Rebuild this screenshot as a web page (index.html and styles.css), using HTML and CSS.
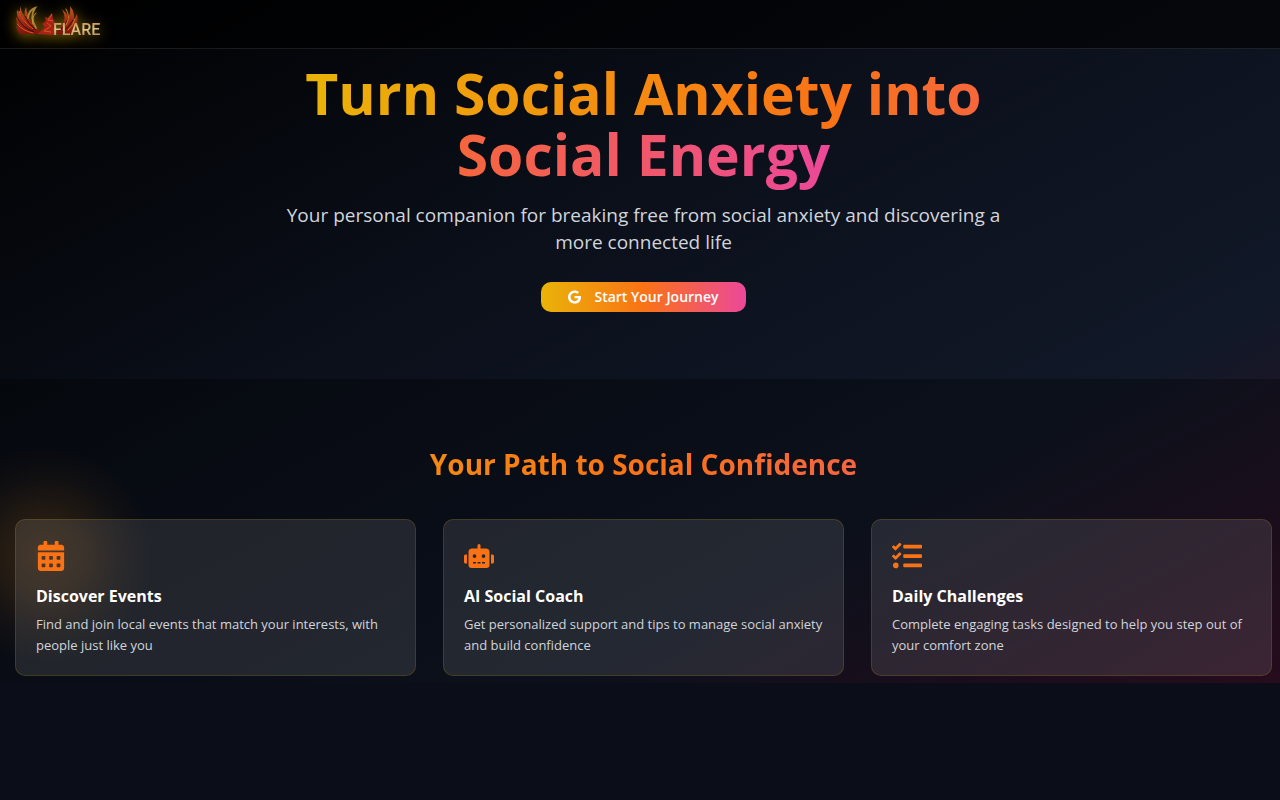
FILE: index.html
```html
<!DOCTYPE html>
<html lang="en">
<head>
<meta charset="utf-8">
<meta name="viewport" content="width=device-width, initial-scale=1">
<title>Flare</title>
<link rel="stylesheet" href="styles.css">
</head>
<body>
<div class="page">
  <header class="topbar">
    <a class="logo" href="#" aria-label="Flare home">
      <svg class="logo-art" viewBox="0 0 82 34" role="img" aria-label="Flare">
        <defs>
          <linearGradient id="fire" x1="0" y1="0" x2="0" y2="1">
            <stop offset="0" stop-color="#b8601f"/>
            <stop offset="0.45" stop-color="#a83216"/>
            <stop offset="1" stop-color="#7c140e"/>
          </linearGradient>
          <linearGradient id="gold" x1="0" y1="0" x2="0" y2="1">
            <stop offset="0" stop-color="#c08a45"/>
            <stop offset="0.5" stop-color="#dcc48c"/>
            <stop offset="1" stop-color="#a87838"/>
          </linearGradient>
        </defs>
        <path d="M4 1Q5 7 9 12Q8 6 10 2Q11 12 18 20L24 26L26 29H4Q1 26 0 21L3 22Q0 17 0 12L3 15Q0 9 1 5L4 9Z" fill="url(#fire)"/>
        <path d="M54 1Q60 8 57 17L61 9Q63 18 58 24L61 21Q60 27 55 29H38L44 23Q50 17 48 9Q47 5 45 4Q51 7 52 13Q55 8 54 1Z" fill="url(#fire)"/>
        <g fill="none" stroke="#3a0806" stroke-width="1">
          <path d="M4 8Q7 18 18 25"/>
          <path d="M2 14Q7 23 18 27"/>
          <path d="M9 11Q12 19 20 25"/>
          <path d="M57 15Q54 22 46 27"/>
          <path d="M52 13Q51 19 43 26"/>
        </g>
        <g fill="none" stroke-linecap="round">
          <path d="M3 6Q6 17 17 24M1 19Q7 26 17 28" stroke="#dd5a24"/>
          <path d="M12 13Q13 5 19 3Q13 12 20 23" stroke="#a87f2c" stroke-width="2"/>
          <path d="M17 19Q15 13 20 8" stroke="#c0963e"/>
          <path d="M50 4Q55 12 50 20M59 14Q58 20 52 25" stroke="#c9802a"/>
        </g>
        <path d="M21 29L26 25L29 22L26 19L30 16L29 12L32 13L36 8L37 14L39 17L37 21L40 27L37 30Z" fill="#a92214"/>
        <path d="M36 9L32 15L37 16M31 18L35 21L28 26L35 27" fill="none" stroke="#d0552a"/>
        <text class="logo-text" x="37" y="30" fill="url(#gold)">FLARE</text>
      </svg>
    </a>
  </header>
  <main>
    <section class="hero">
      <h1 class="hero-title"><span class="flame-text">Turn Social Anxiety into Social Energy</span></h1>
      <p class="hero-text">Your personal companion for breaking free from social anxiety and discovering a more connected life</p>
      <button class="cta" type="button">
        <svg class="cta-icon" viewBox="0 0 488 512" aria-hidden="true"><path d="M488 261.8C488 403.3 391.1 504 248 504 110.8 504 0 393.2 0 256S110.8 8 248 8c66.8 0 123 24.5 166.3 64.9l-67.5 64.9C258.5 52.6 94.3 116.6 94.3 256c0 86.5 69.1 156.6 153.7 156.6 98.2 0 135-70.4 140.8-106.9H248v-85.3h236.1c2.3 12.7 3.9 24.9 3.9 41.4z"/></svg>
        Start Your Journey
      </button>
    </section>
    <section class="features">
      <h2 class="features-title flame-text">Your Path to Social Confidence</h2>
      <div class="cards">
        <article class="card">
          <svg class="card-icon" viewBox="0 0 448 512" aria-hidden="true"><path d="M0 464c0 26.500 21.500 48 48 48h352c26.500 0 48-21.500 48-48V192H0zM332 256h40q12 0 12 12v40q0 12-12 12h-40q-12 0-12-12v-40q0-12 12-12zm0 128h40q12 0 12 12v40q0 12-12 12h-40q-12 0-12-12v-40q0-12 12-12zM204 256h40q12 0 12 12v40q0 12-12 12h-40q-12 0-12-12v-40q0-12 12-12zm0 128h40q12 0 12 12v40q0 12-12 12h-40q-12 0-12-12v-40q0-12 12-12zM76 256h40q12 0 12 12v40q0 12-12 12H76q-12 0-12-12v-40q0-12 12-12zm0 128h40q12 0 12 12v40q0 12-12 12H76q-12 0-12-12v-40q0-12 12-12zM400 64h-48V16c0-8.800-7.200-16-16-16h-32c-8.800 0-16 7.200-16 16v48H160V16c0-8.800-7.200-16-16-16h-32c-8.800 0-16 7.200-16 16v48H48C21.500 64 0 85.500 0 112v48h448v-48c0-26.500-21.500-48-48-48z"/></svg>
          <h3 class="card-title">Discover Events</h3>
          <p class="card-text">Find and join local events that match your interests, with people just like you</p>
        </article>
        <article class="card">
          <svg class="card-icon" viewBox="0 0 640 512" aria-hidden="true"><path d="M32 224H64V416H32A32 32 0 0 1 0 384V256A32 32 0 0 1 32 224Zm512-48V448a64 64 0 0 1-64 64H160a64 64 0 0 1-64-64V176a80 80 0 0 1 80-80H288V32a32 32 0 0 1 64 0V96H464A80 80 0 0 1 544 176ZM264 256a40 40 0 1 0-40 40A40 40 0 0 0 264 256Zm-8 128H192v32h64Zm96 0H288v32h64ZM456 256a40 40 0 1 0-40 40A40 40 0 0 0 456 256Zm-8 128H384v32h64ZM640 256V384a32 32 0 0 1-32 32H576V224h32A32 32 0 0 1 640 256Z"/></svg>
          <h3 class="card-title">AI Social Coach</h3>
          <p class="card-text">Get personalized support and tips to manage social anxiety and build confidence</p>
        </article>
        <article class="card">
          <svg class="card-icon" viewBox="0 0 512 512" aria-hidden="true"><path d="M139.610 35.500a12 12 0 0 0-17 0L58.930 98.810l-22.700-22.120a12 12 0 0 0-17 0L3.530 92.410a12 12 0 0 0 0 17l47.590 47.400a12.780 12.780 0 0 0 17.610 0l15.590-15.620L156.520 69a12.090 12.090 0 0 0 .090-17zm0 159.190a12 12 0 0 0-17 0l-63.680 63.720-22.700-22.100a12 12 0 0 0-17 0L3.530 252a12 12 0 0 0 0 17L51 316.500a12.770 12.770 0 0 0 17.600 0l15.700-15.690 72.200-72.220a12 12 0 0 0 .090-16.900zM64 368c-26.490 0-48.590 21.500-48.590 48S37.530 464 64 464a48 48 0 0 0 0-96zm432 16H208a16 16 0 0 0-16 16v32a16 16 0 0 0 16 16h288a16 16 0 0 0 16-16v-32a16 16 0 0 0-16-16zm0-320H208a16 16 0 0 0-16 16v32a16 16 0 0 0 16 16h288a16 16 0 0 0 16-16V80a16 16 0 0 0-16-16zm0 160H208a16 16 0 0 0-16 16v32a16 16 0 0 0 16 16h288a16 16 0 0 0 16-16v-32a16 16 0 0 0-16-16z"/></svg>
          <h3 class="card-title">Daily Challenges</h3>
          <p class="card-text">Complete engaging tasks designed to help you step out of your comfort zone</p>
        </article>
      </div>
    </section>
  </main>
</div>
</body>
</html>
```
FILE: styles.css
```css
* {
  box-sizing: border-box;
}

body {
  margin: 0;
  min-height: 100vh;
  background: #0b0d18;
  color: #fff;
  font-family: "Segoe UI", "Open Sans", "Noto Sans", sans-serif;
}

.page {
  background: linear-gradient(to bottom right, #000 0%, #0b101b 40%, #111827 72%, #38122a 100%);
}

.topbar {
  display: flex;
  align-items: center;
  height: 49px;
  padding: 0 16px;
  background: rgba(0, 0, 0, 0.6);
  border-bottom: 1px solid rgba(255, 255, 255, 0.1);
}

.logo {
  display: block;
  margin-bottom: 5px;
}

.logo-art {
  display: block;
  width: 82px;
  height: 34px;
  overflow: visible;
  filter: drop-shadow(0 2px 7px rgba(234, 179, 8, 0.6));
}

.logo-text {
  font-family: Roboto, sans-serif;
  font-size: 16px;
  font-weight: 500;
}

.hero {
  display: flex;
  flex-direction: column;
  align-items: center;
  padding: 14px 8px 67px 15px;
  text-align: center;
}

.flame-text {
  background: linear-gradient(to right, #eab308, #f97316, #ec4899);
  background-clip: text;
  -webkit-background-clip: text;
  color: transparent;
}

.hero-title {
  max-width: 768px;
  margin: 0;
  padding-bottom: 9px;
  font-size: 57px;
  line-height: 61px;
}

.hero-text {
  max-width: 740px;
  margin: 8px 0 26px;
  color: #d1d5db;
  font-size: 19px;
  line-height: 27px;
}

.cta {
  display: flex;
  align-items: center;
  gap: 13px;
  padding: 5px 27px;
  border: 0;
  border-radius: 10px;
  background: linear-gradient(to right, #eab308, #f97316, #ec4899);
  color: #fff;
  font: 600 14px/20px "Segoe UI", "Open Sans", "Noto Sans", sans-serif;
}

.cta-icon {
  width: 13px;
  height: 14px;
  fill: currentColor;
}

.features {
  padding: 63px 8px 7px 15px;
  background:
    radial-gradient(circle at 45px 176px, rgba(249, 145, 22, 0.18), rgba(249, 145, 22, 0.12) 40px, rgba(249, 145, 22, 0.04) 80px, transparent 110px),
    rgba(0, 0, 0, 0.3);
}

.features-title {
  margin: 0;
  font-size: 28px;
  line-height: 44px;
  text-align: center;
}

.cards {
  display: grid;
  grid-template-columns: repeat(3, 1fr);
  gap: 27px;
  margin-top: 33px;
}

.card {
  padding: 21px 20px 19px;
  border: 1px solid rgba(234, 179, 8, 0.16);
  border-radius: 10px;
  background: rgba(255, 255, 255, 0.1);
}

.card-icon {
  display: block;
  width: 30px;
  height: 30px;
  fill: #f97316;
}

.card-title {
  margin: 12px 0 5px;
  font-size: 16px;
  line-height: 26px;
}

.card-text {
  margin: 0;
  color: #d1d5db;
  font-size: 13px;
  line-height: 21px;
}
```
